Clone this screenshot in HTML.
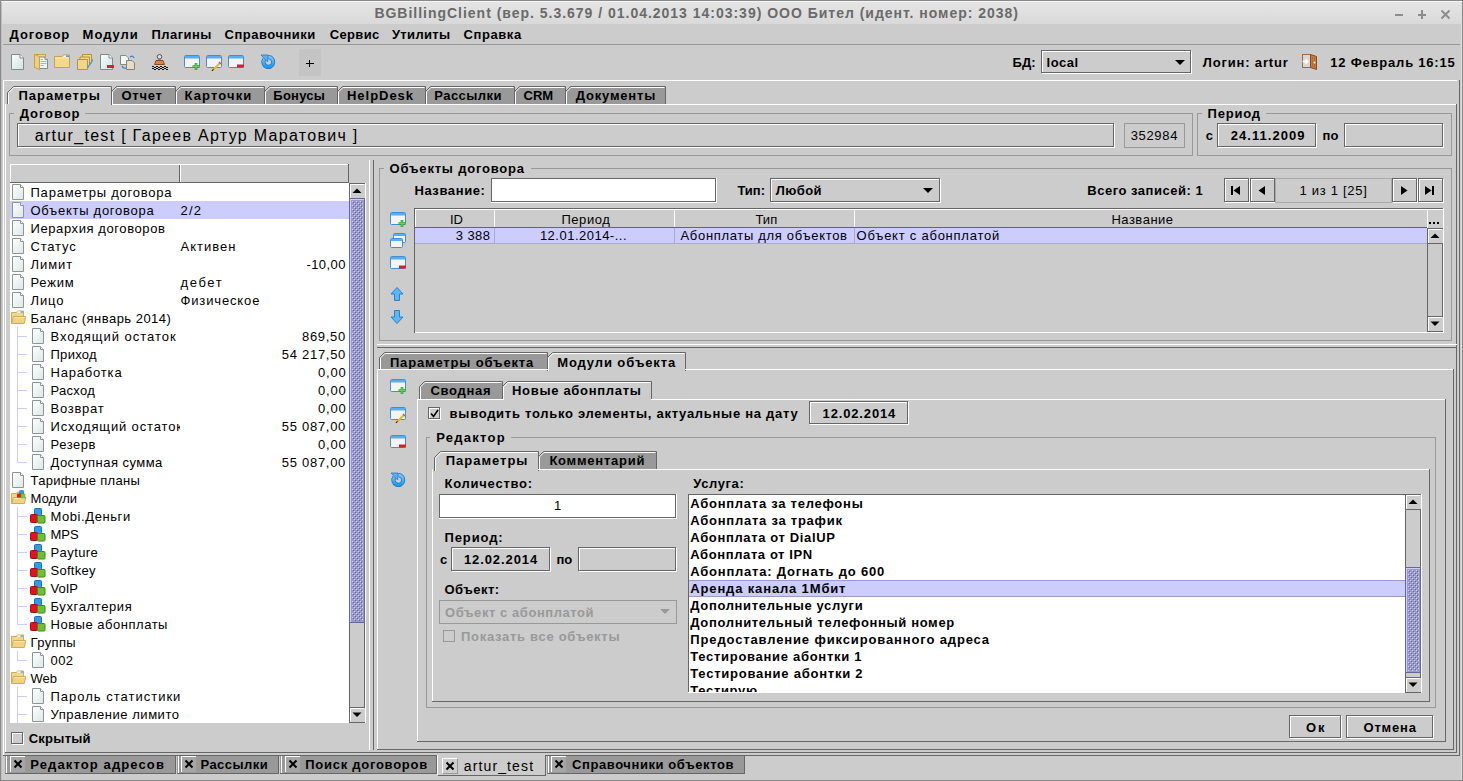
<!DOCTYPE html>
<html><head><meta charset="utf-8"><style>
html,body{margin:0;padding:0;width:1463px;height:781px;overflow:hidden;background:#cccccc}
.a{position:absolute;box-sizing:border-box}
.t{position:absolute;white-space:nowrap;font-family:"Liberation Sans",sans-serif;color:#000}
svg.a{overflow:visible}
</style></head><body>
<div class="a" style="left:0;top:0;width:1463px;height:24px;background:linear-gradient(#e6e6e6,#d9d9d9)"></div>
<div class="a" style="left:0px;top:0px;width:1463px;height:1px;background:#8a8a8a"></div>
<div class="a" style="left:1px;top:1px;width:1461px;height:1px;background:#f4f4f4"></div>
<div class="t" style="left:374.40px;top:4.65px;font-size:14px;line-height:17px;font-weight:bold;letter-spacing:0.983px;color:#6a6a6a;">BGBillingClient (вер. 5.3.679 / 01.04.2013 14:03:39) ООО Бител (идент. номер: 2038)</div>
<div class="a" style="left:1395px;top:14px;width:8px;height:1px;background:#8c8c8c"></div>
<div class="a" style="left:1395px;top:15px;width:8px;height:1px;background:#8c8c8c"></div>
<div class="a" style="left:1418px;top:14px;width:8px;height:1px;background:#8c8c8c"></div>
<div class="a" style="left:1418px;top:15px;width:8px;height:1px;background:#8c8c8c"></div>
<div class="a" style="left:1421px;top:10px;width:2px;height:9px;background:#8c8c8c"></div>
<svg class="a" style="left:1440px;top:9px" width="11" height="11" viewBox="0 0 11 11"><path d="M1.5,1.5 L9.5,9.5 M9.5,1.5 L1.5,9.5" stroke="#8c8c8c" stroke-width="2"/></svg>
<div class="a" style="left:0px;top:0px;width:1px;height:781px;background:#8a8a8a"></div>
<div class="a" style="left:1px;top:2px;width:1px;height:779px;background:#bdbdbd"></div>
<div class="a" style="left:1462px;top:0px;width:1px;height:781px;background:#8a8a8a"></div>
<div class="a" style="left:1461px;top:2px;width:1px;height:779px;background:#dcdcdc"></div>
<div class="a" style="left:3px;top:44px;width:1457px;height:1px;background:#999999"></div>
<div class="t" style="left:9.60px;top:26.50px;font-size:13px;line-height:16px;font-weight:bold;letter-spacing:0.900px;color:#000;">Договор</div>
<div class="t" style="left:82.60px;top:26.50px;font-size:13px;line-height:16px;font-weight:bold;letter-spacing:0.980px;color:#000;">Модули</div>
<div class="t" style="left:151.50px;top:26.50px;font-size:13px;line-height:16px;font-weight:bold;letter-spacing:0.450px;color:#000;">Плагины</div>
<div class="t" style="left:224.60px;top:26.50px;font-size:13px;line-height:16px;font-weight:bold;letter-spacing:0.490px;color:#000;">Справочники</div>
<div class="t" style="left:329.80px;top:26.50px;font-size:13px;line-height:16px;font-weight:bold;letter-spacing:0.320px;color:#000;">Сервис</div>
<div class="t" style="left:391.90px;top:26.50px;font-size:13px;line-height:16px;font-weight:bold;letter-spacing:0.350px;color:#000;">Утилиты</div>
<div class="t" style="left:463.60px;top:26.50px;font-size:13px;line-height:16px;font-weight:bold;letter-spacing:0.567px;color:#000;">Справка</div>
<svg class="a" style="left:11px;top:54px" width="15" height="17" viewBox="0 0 15 17"><defs><linearGradient id="tp" x1="0" y1="0" x2="1" y2="1"><stop offset="0" stop-color="#fbfdfd"/><stop offset="1" stop-color="#d2e2e2"/></linearGradient></defs><path d="M0.5,0.5 H9 L12.5,4 V15.5 H0.5 Z" fill="url(#tp)" stroke="#7d8c8c"/><path d="M9,0.5 V4 H12.5" fill="#fff" stroke="#7d8c8c"/></svg>
<svg class="a" style="left:34px;top:54px" width="16" height="17" viewBox="0 0 16 17"><rect x="0.5" y="0.5" width="11" height="13" fill="#f2d68a" stroke="#c9a050"/><path d="M5.5,3 H11 L13.5,5.5 V14.5 H5.5 Z" fill="#eef6f6" stroke="#7d8c8c"/><path d="M11,3 V5.5 H13.5" fill="#fff" stroke="#7d8c8c"/><path d="M6.5,5.5 H9 M6.5,7.5 H12.5 M6.5,9.5 H12.5 M6.5,11.5 H10" stroke="#aab6b6"/><path d="M0.5,0.5 L5.5,2.5 V15.5 L0.5,13.5 Z" fill="#f0cf7a" stroke="#c9a050"/></svg>
<svg class="a" style="left:54px;top:54px" width="17" height="15" viewBox="0 0 17 15"><path d="M0.5,2.5 H8 L9,1 H15.5 V13.5 H0.5 Z" fill="#f4d98c" stroke="#c9a050"/><path d="M9.5,2.2 H12" stroke="#fff" stroke-width="1.2"/><path d="M12,2.2 H15" stroke="#2aa8f0" stroke-width="1.4"/><path d="M1,4 H15" stroke="#fbeab4"/></svg>
<svg class="a" style="left:77px;top:54px" width="16" height="17" viewBox="0 0 16 17"><path d="M5.5,0.5 H14.5 V9.5 H5.5 Z" fill="#f0d58a" stroke="#b8943a"/><path d="M3,3 H12.5 V12 H3 Z" fill="#f0d58a" stroke="#b8943a"/><path d="M0.5,5.5 H10.5 V15.5 H0.5 Z" fill="#f0d58a" stroke="#b8943a"/><path d="M11,11 V14 M13,8 V11 M15,5 V8" stroke="#3aa0e8" stroke-width="1.5"/></svg>
<svg class="a" style="left:100px;top:54px" width="15" height="17" viewBox="0 0 15 17"><defs><linearGradient id="tp" x1="0" y1="0" x2="1" y2="1"><stop offset="0" stop-color="#fbfdfd"/><stop offset="1" stop-color="#d2e2e2"/></linearGradient></defs><path d="M0.5,0.5 H9 L12.5,4 V15.5 H0.5 Z" fill="url(#tp)" stroke="#7d8c8c"/><path d="M9,0.5 V4 H12.5" fill="#fff" stroke="#7d8c8c"/><rect x="7" y="11" width="7" height="3" fill="#d8202a"/></svg>
<svg class="a" style="left:120px;top:54px" width="17" height="17" viewBox="0 0 17 17"><path d="M0.5,1.5 H6 L8.5,4 V10.5 H0.5 Z" fill="#f2f6f6" stroke="#7d8c8c"/><path d="M6.5,6.5 H12 L14.5,9 V15.5 H6.5 Z" fill="#e8dcc8" stroke="#8c8070"/><path d="M10,3 Q13,1 14,4" fill="none" stroke="#3a78e0" stroke-width="1.2"/><path d="M2,12 Q3,15 6,14" fill="none" stroke="#3a78e0" stroke-width="1.2"/></svg>
<svg class="a" style="left:151px;top:54px" width="18" height="17" viewBox="0 0 18 17"><defs><pattern id="chk" x="1" y="12" width="4" height="2" patternUnits="userSpaceOnUse"><rect x="0" y="0" width="2" height="1" fill="#111"/><rect x="2" y="1" width="2" height="1" fill="#111"/></pattern></defs><circle cx="8.5" cy="2.8" r="2.3" fill="#e0e0e0" stroke="#555"/><rect x="7.5" y="4.5" width="2" height="4" fill="#777"/><path d="M3.5,10.5 L5,6.5 H12 L13.5,10.5 Z" fill="#d8864c" stroke="#8a4a20"/><rect x="1" y="12" width="16" height="4" fill="url(#chk)"/></svg>
<svg class="a" style="left:184px;top:55px" width="17" height="17" viewBox="0 0 17 17"><rect x="0.5" y="0.5" width="15" height="12" rx="1" fill="#f4f4f4" stroke="#3f8fd8"/><rect x="1" y="1" width="14" height="2.5" fill="#5aaef0"/><path d="M12,8 V15 M8.5,11.5 H15.5" stroke="#2aa52a" stroke-width="2.6"/><path d="M12,8.5 V14.5 M9,11.5 H15" stroke="#6fd04f" stroke-width="1.2"/></svg>
<svg class="a" style="left:206px;top:55px" width="17" height="17" viewBox="0 0 17 17"><rect x="0.5" y="0.5" width="15" height="12" rx="1" fill="#f4f4f4" stroke="#3f8fd8"/><rect x="1" y="1" width="14" height="2.5" fill="#5aaef0"/><path d="M7,15 L14,8" stroke="#e8b830" stroke-width="2.2"/><path d="M6,16 L7.5,14" stroke="#333" stroke-width="1.2"/><path d="M13,7 L15,9" stroke="#e05050" stroke-width="1.5"/></svg>
<svg class="a" style="left:228px;top:55px" width="17" height="17" viewBox="0 0 17 17"><rect x="0.5" y="0.5" width="15" height="12" rx="1" fill="#f4f4f4" stroke="#3f8fd8"/><rect x="1" y="1" width="14" height="2.5" fill="#5aaef0"/><rect x="9" y="9.5" width="7" height="3" fill="#d8202a"/></svg>
<svg class="a" style="left:260px;top:54px" width="16" height="16" viewBox="0 0 16 16"><defs><linearGradient id="rg260" x1="0" y1="0" x2="0" y2="1"><stop offset="0" stop-color="#7cc4f4"/><stop offset="1" stop-color="#1a9cf0"/></linearGradient></defs><path d="M8.2,3.1 A4.9,4.9 0 1,1 4.3,5.2" fill="none" stroke="#2272c8" stroke-width="4.2"/><path d="M8.2,3.1 A4.9,4.9 0 1,1 4.3,5.2" fill="none" stroke="url(#rg260)" stroke-width="2.8"/><path d="M1,1 H8 L7.6,8 Z" fill="#5ab0f0" stroke="#2a78d0" stroke-width="0.8"/></svg>
<div class="a" style="left:299px;top:49px;width:22px;height:27px;background:#c4c4c4"></div>
<div class="a" style="left:306px;top:63px;width:8px;height:1px;background:#000"></div>
<div class="a" style="left:309px;top:60px;width:1px;height:7px;background:#000"></div>
<div class="a" style="left:3px;top:80px;width:1454px;height:1px;background:#ffffff"></div>
<div class="t" style="left:1012.60px;top:54.50px;font-size:13px;line-height:16px;font-weight:bold;letter-spacing:0.000px;color:#000;">БД:</div>
<div class="a" style="left:1042px;top:51px;width:150px;height:23px;border:1px solid #fff"></div>
<div class="a" style="left:1041px;top:50px;width:150px;height:23px;border:1px solid #666"></div>
<div class="t" style="left:1046.50px;top:54.50px;font-size:13px;line-height:16px;font-weight:bold;letter-spacing:0.525px;color:#000;">local</div>
<svg class="a" style="left:1175px;top:60px" width="11" height="6" viewBox="0 0 11 6"><path d="M0,0 H10 L5,5 Z" fill="#000"/></svg>
<div class="t" style="left:1202.70px;top:54.50px;font-size:13px;line-height:16px;font-weight:bold;letter-spacing:0.845px;color:#000;">Логин: artur</div>
<svg class="a" style="left:1302px;top:54px" width="16" height="17" viewBox="0 0 16 17"><rect x="0.5" y="0.5" width="8" height="13" fill="#d8d8d8" stroke="#a8643a"/><path d="M0.5,7.5 H5.5" stroke="#fff" stroke-width="1.6"/><path d="M3.5,5.3 L5.8,7.5 L3.5,9.7" fill="none" stroke="#fff" stroke-width="1.4"/><path d="M8.5,0.5 L14.5,2.5 V15.5 L8.5,13.5 Z" fill="#c87a40" stroke="#8a4a20"/><path d="M10.5,3 V13 M12.5,3.5 V13.5" stroke="#a85e2c" stroke-width="0.6"/><circle cx="12.5" cy="8.5" r="0.9" fill="#fff"/></svg>
<div class="t" style="left:1330.30px;top:54.50px;font-size:13px;line-height:16px;font-weight:bold;letter-spacing:0.780px;color:#000;">12 Февраль 16:15</div>
<div class="a" style="left:3px;top:80px;width:1px;height:676px;background:#fff"></div>
<div class="a" style="left:3px;top:755px;width:1457px;height:1px;background:#666"></div>
<div class="a" style="left:1459px;top:80px;width:1px;height:676px;background:#666"></div>
<div class="a" style="left:5px;top:104px;width:1452px;height:1px;background:#fff"></div>
<div class="a" style="left:5px;top:104px;width:1px;height:649px;background:#fff"></div>
<div class="a" style="left:5px;top:752px;width:1452px;height:1px;background:#666"></div>
<div class="a" style="left:1456px;top:104px;width:1px;height:649px;background:#666"></div>
<svg class="a" style="left:111px;top:86px" width="65" height="18" viewBox="0 0 65 18"><polygon points="0.5,18 0.5,5.5 5.5,0.5 64.5,0.5 64.5,18" fill="#999999"/><polyline points="0.5,18 0.5,5.5 5.5,0.5 64.5,0.5 64.5,18" fill="none" stroke="#666" stroke-width="1"/><polyline points="1.5,18 1.5,5.9 5.9,1.5 63.5,1.5" fill="none" stroke="#fff" stroke-width="1"/></svg>
<div class="t" style="left:121.50px;top:87.50px;font-size:13px;line-height:16px;font-weight:bold;letter-spacing:0.750px;color:#000;">Отчет</div>
<svg class="a" style="left:175px;top:86px" width="90" height="18" viewBox="0 0 90 18"><polygon points="0.5,18 0.5,5.5 5.5,0.5 89.5,0.5 89.5,18" fill="#999999"/><polyline points="0.5,18 0.5,5.5 5.5,0.5 89.5,0.5 89.5,18" fill="none" stroke="#666" stroke-width="1"/><polyline points="1.5,18 1.5,5.9 5.9,1.5 88.5,1.5" fill="none" stroke="#fff" stroke-width="1"/></svg>
<div class="t" style="left:184.50px;top:87.50px;font-size:13px;line-height:16px;font-weight:bold;letter-spacing:1.114px;color:#000;">Карточки</div>
<svg class="a" style="left:264px;top:86px" width="74" height="18" viewBox="0 0 74 18"><polygon points="0.5,18 0.5,5.5 5.5,0.5 73.5,0.5 73.5,18" fill="#999999"/><polyline points="0.5,18 0.5,5.5 5.5,0.5 73.5,0.5 73.5,18" fill="none" stroke="#666" stroke-width="1"/><polyline points="1.5,18 1.5,5.9 5.9,1.5 72.5,1.5" fill="none" stroke="#fff" stroke-width="1"/></svg>
<div class="t" style="left:273.30px;top:87.50px;font-size:13px;line-height:16px;font-weight:bold;letter-spacing:0.240px;color:#000;">Бонусы</div>
<svg class="a" style="left:337px;top:86px" width="89" height="18" viewBox="0 0 89 18"><polygon points="0.5,18 0.5,5.5 5.5,0.5 88.5,0.5 88.5,18" fill="#999999"/><polyline points="0.5,18 0.5,5.5 5.5,0.5 88.5,0.5 88.5,18" fill="none" stroke="#666" stroke-width="1"/><polyline points="1.5,18 1.5,5.9 5.9,1.5 87.5,1.5" fill="none" stroke="#fff" stroke-width="1"/></svg>
<div class="t" style="left:347.00px;top:87.50px;font-size:13px;line-height:16px;font-weight:bold;letter-spacing:0.971px;color:#000;">HelpDesk</div>
<svg class="a" style="left:425px;top:86px" width="90" height="18" viewBox="0 0 90 18"><polygon points="0.5,18 0.5,5.5 5.5,0.5 89.5,0.5 89.5,18" fill="#999999"/><polyline points="0.5,18 0.5,5.5 5.5,0.5 89.5,0.5 89.5,18" fill="none" stroke="#666" stroke-width="1"/><polyline points="1.5,18 1.5,5.9 5.9,1.5 88.5,1.5" fill="none" stroke="#fff" stroke-width="1"/></svg>
<div class="t" style="left:434.30px;top:87.50px;font-size:13px;line-height:16px;font-weight:bold;letter-spacing:0.443px;color:#000;">Рассылки</div>
<svg class="a" style="left:514px;top:86px" width="52" height="18" viewBox="0 0 52 18"><polygon points="0.5,18 0.5,5.5 5.5,0.5 51.5,0.5 51.5,18" fill="#999999"/><polyline points="0.5,18 0.5,5.5 5.5,0.5 51.5,0.5 51.5,18" fill="none" stroke="#666" stroke-width="1"/><polyline points="1.5,18 1.5,5.9 5.9,1.5 50.5,1.5" fill="none" stroke="#fff" stroke-width="1"/></svg>
<div class="t" style="left:523.50px;top:87.50px;font-size:13px;line-height:16px;font-weight:bold;letter-spacing:0.000px;color:#000;">CRM</div>
<svg class="a" style="left:565px;top:86px" width="101" height="18" viewBox="0 0 101 18"><polygon points="0.5,18 0.5,5.5 5.5,0.5 100.5,0.5 100.5,18" fill="#999999"/><polyline points="0.5,18 0.5,5.5 5.5,0.5 100.5,0.5 100.5,18" fill="none" stroke="#666" stroke-width="1"/><polyline points="1.5,18 1.5,5.9 5.9,1.5 99.5,1.5" fill="none" stroke="#fff" stroke-width="1"/></svg>
<div class="t" style="left:575.80px;top:87.50px;font-size:13px;line-height:16px;font-weight:bold;letter-spacing:0.800px;color:#000;">Документы</div>
<svg class="a" style="left:7px;top:86px" width="105" height="19" viewBox="0 0 105 19"><polygon points="0.5,19 0.5,6.5 6.5,0.5 104.5,0.5 104.5,19" fill="#cccccc"/><polyline points="0.5,19 0.5,6.5 6.5,0.5 104.5,0.5 104.5,19" fill="none" stroke="#666" stroke-width="1"/><polyline points="1.5,19 1.5,6.9 6.9,1.5 103.5,1.5" fill="none" stroke="#fff" stroke-width="1"/></svg>
<div class="a" style="left:6px;top:104px;width:105px;height:1px;background:#ccc"></div>
<div class="t" style="left:18.60px;top:87.50px;font-size:13px;line-height:16px;font-weight:bold;letter-spacing:0.925px;color:#000;">Параметры</div>
<div class="a" style="left:9px;top:113px;width:1184px;height:43px;border:1px solid #999"></div>
<div class="a" style="left:13.7px;top:112px;width:71.6px;height:3px;background:#ccc"></div>
<div class="t" style="left:19.70px;top:105.90px;font-size:13px;line-height:16px;font-weight:bold;letter-spacing:0.933px;color:#000;">Договор</div>
<div class="a" style="left:18px;top:124px;width:1097px;height:24px;border:1px solid #fff"></div>
<div class="a" style="left:17px;top:123px;width:1097px;height:24px;border:1px solid #666"></div>
<div class="t" style="left:34.80px;top:125.96px;font-size:16px;line-height:19px;font-weight:normal;letter-spacing:1.300px;color:#000;">artur_test [ Гареев Артур Маратович ]</div>
<div class="a" style="left:1124px;top:123px;width:61px;height:25px;border:1px solid #999"></div>
<div class="t" style="left:1130.70px;top:127.50px;font-size:13px;line-height:16px;font-weight:normal;letter-spacing:0.660px;color:#000;">352984</div>
<div class="a" style="left:1197px;top:113px;width:255px;height:43px;border:1px solid #999"></div>
<div class="a" style="left:1201.6px;top:112px;width:64.90000000000009px;height:3px;background:#ccc"></div>
<div class="t" style="left:1207.60px;top:105.90px;font-size:13px;line-height:16px;font-weight:bold;letter-spacing:0.780px;color:#000;">Период</div>
<div class="t" style="left:1205.80px;top:127.50px;font-size:13px;line-height:16px;font-weight:bold;letter-spacing:0.000px;color:#000;">с</div>
<div class="a" style="left:1218px;top:124px;width:99px;height:24px;border:1px solid #fff"></div>
<div class="a" style="left:1217px;top:123px;width:99px;height:24px;border:1px solid #666"></div>
<div class="t" style="left:1230.80px;top:127.50px;font-size:13px;line-height:16px;font-weight:bold;letter-spacing:1.044px;color:#000;">24.11.2009</div>
<div class="t" style="left:1322.60px;top:127.50px;font-size:13px;line-height:16px;font-weight:bold;letter-spacing:0.000px;color:#000;">по</div>
<div class="a" style="left:1345px;top:124px;width:99px;height:24px;border:1px solid #fff"></div>
<div class="a" style="left:1344px;top:123px;width:99px;height:24px;border:1px solid #666"></div>
<div class="a" style="left:10px;top:164px;width:339px;height:19px;background:#cccccc"></div>
<div class="a" style="left:10px;top:164px;width:339px;height:1px;background:#fff"></div>
<div class="a" style="left:10px;top:182px;width:339px;height:1px;background:#666"></div>
<div class="a" style="left:10px;top:164px;width:1px;height:18px;background:#fff"></div>
<div class="a" style="left:179px;top:165px;width:1px;height:17px;background:#666"></div>
<div class="a" style="left:180px;top:165px;width:1px;height:17px;background:#fff"></div>
<div class="a" style="left:348px;top:164px;width:1px;height:19px;background:#666"></div>
<div class="a" style="left:10px;top:183px;width:339px;height:540px;background:#fff"></div>
<div class="a" style="left:10px;top:201px;width:339px;height:18px;background:#ccccff"></div>
<div class="a" style="left:17px;top:327px;width:1px;height:136px;background:#ccccff"></div>
<div class="a" style="left:17px;top:336px;width:10px;height:1px;background:#ccccff"></div>
<div class="a" style="left:17px;top:354px;width:10px;height:1px;background:#ccccff"></div>
<div class="a" style="left:17px;top:372px;width:10px;height:1px;background:#ccccff"></div>
<div class="a" style="left:17px;top:390px;width:10px;height:1px;background:#ccccff"></div>
<div class="a" style="left:17px;top:408px;width:10px;height:1px;background:#ccccff"></div>
<div class="a" style="left:17px;top:426px;width:10px;height:1px;background:#ccccff"></div>
<div class="a" style="left:17px;top:444px;width:10px;height:1px;background:#ccccff"></div>
<div class="a" style="left:17px;top:462px;width:10px;height:1px;background:#ccccff"></div>
<div class="a" style="left:17px;top:507px;width:1px;height:118px;background:#ccccff"></div>
<div class="a" style="left:17px;top:516px;width:10px;height:1px;background:#ccccff"></div>
<div class="a" style="left:17px;top:534px;width:10px;height:1px;background:#ccccff"></div>
<div class="a" style="left:17px;top:552px;width:10px;height:1px;background:#ccccff"></div>
<div class="a" style="left:17px;top:570px;width:10px;height:1px;background:#ccccff"></div>
<div class="a" style="left:17px;top:588px;width:10px;height:1px;background:#ccccff"></div>
<div class="a" style="left:17px;top:606px;width:10px;height:1px;background:#ccccff"></div>
<div class="a" style="left:17px;top:624px;width:10px;height:1px;background:#ccccff"></div>
<div class="a" style="left:17px;top:651px;width:1px;height:10px;background:#ccccff"></div>
<div class="a" style="left:17px;top:660px;width:10px;height:1px;background:#ccccff"></div>
<div class="a" style="left:17px;top:687px;width:1px;height:37px;background:#ccccff"></div>
<div class="a" style="left:17px;top:696px;width:10px;height:1px;background:#ccccff"></div>
<div class="a" style="left:17px;top:714px;width:10px;height:1px;background:#ccccff"></div>
<svg class="a" style="left:12px;top:184px" width="13" height="17" viewBox="0 0 13 17"><defs><linearGradient id="pg" x1="0" y1="0" x2="1" y2="1"><stop offset="0" stop-color="#ffffff"/><stop offset="1" stop-color="#dde6e6"/></linearGradient></defs><path d="M0.5,0.5 H8.5 L11.5,3.5 V15.5 H0.5 Z" fill="url(#pg)" stroke="#8c9696"/><path d="M8.5,0.5 V3.5 H11.5" fill="#fff" stroke="#8c9696"/></svg>
<div class="t" style="left:30.50px;top:184.50px;font-size:13px;line-height:16px;font-weight:normal;letter-spacing:0.776px;color:#000;">Параметры договора</div>
<svg class="a" style="left:12px;top:202px" width="13" height="17" viewBox="0 0 13 17"><defs><linearGradient id="pg" x1="0" y1="0" x2="1" y2="1"><stop offset="0" stop-color="#ffffff"/><stop offset="1" stop-color="#dde6e6"/></linearGradient></defs><path d="M0.5,0.5 H8.5 L11.5,3.5 V15.5 H0.5 Z" fill="url(#pg)" stroke="#8c9696"/><path d="M8.5,0.5 V3.5 H11.5" fill="#fff" stroke="#8c9696"/></svg>
<div class="t" style="left:30.50px;top:202.50px;font-size:13px;line-height:16px;font-weight:normal;letter-spacing:0.733px;color:#000;">Объекты договора</div>
<div class="t" style="left:180.50px;top:202.50px;font-size:13px;line-height:16px;font-weight:normal;letter-spacing:1.150px;color:#000;">2/2</div>
<svg class="a" style="left:12px;top:220px" width="13" height="17" viewBox="0 0 13 17"><defs><linearGradient id="pg" x1="0" y1="0" x2="1" y2="1"><stop offset="0" stop-color="#ffffff"/><stop offset="1" stop-color="#dde6e6"/></linearGradient></defs><path d="M0.5,0.5 H8.5 L11.5,3.5 V15.5 H0.5 Z" fill="url(#pg)" stroke="#8c9696"/><path d="M8.5,0.5 V3.5 H11.5" fill="#fff" stroke="#8c9696"/></svg>
<div class="t" style="left:30.50px;top:220.50px;font-size:13px;line-height:16px;font-weight:normal;letter-spacing:0.588px;color:#000;">Иерархия договоров</div>
<svg class="a" style="left:12px;top:238px" width="13" height="17" viewBox="0 0 13 17"><defs><linearGradient id="pg" x1="0" y1="0" x2="1" y2="1"><stop offset="0" stop-color="#ffffff"/><stop offset="1" stop-color="#dde6e6"/></linearGradient></defs><path d="M0.5,0.5 H8.5 L11.5,3.5 V15.5 H0.5 Z" fill="url(#pg)" stroke="#8c9696"/><path d="M8.5,0.5 V3.5 H11.5" fill="#fff" stroke="#8c9696"/></svg>
<div class="t" style="left:30.50px;top:238.50px;font-size:13px;line-height:16px;font-weight:normal;letter-spacing:0.820px;color:#000;">Статус</div>
<div class="t" style="left:180.50px;top:238.50px;font-size:13px;line-height:16px;font-weight:normal;letter-spacing:1.017px;color:#000;">Активен</div>
<svg class="a" style="left:12px;top:256px" width="13" height="17" viewBox="0 0 13 17"><defs><linearGradient id="pg" x1="0" y1="0" x2="1" y2="1"><stop offset="0" stop-color="#ffffff"/><stop offset="1" stop-color="#dde6e6"/></linearGradient></defs><path d="M0.5,0.5 H8.5 L11.5,3.5 V15.5 H0.5 Z" fill="url(#pg)" stroke="#8c9696"/><path d="M8.5,0.5 V3.5 H11.5" fill="#fff" stroke="#8c9696"/></svg>
<div class="t" style="left:30.50px;top:256.50px;font-size:13px;line-height:16px;font-weight:normal;letter-spacing:0.925px;color:#000;">Лимит</div>
<div class="t" style="left:306.50px;top:256.50px;font-size:13px;line-height:16px;font-weight:normal;letter-spacing:0.400px;color:#000;">-10,00</div>
<svg class="a" style="left:12px;top:274px" width="13" height="17" viewBox="0 0 13 17"><defs><linearGradient id="pg" x1="0" y1="0" x2="1" y2="1"><stop offset="0" stop-color="#ffffff"/><stop offset="1" stop-color="#dde6e6"/></linearGradient></defs><path d="M0.5,0.5 H8.5 L11.5,3.5 V15.5 H0.5 Z" fill="url(#pg)" stroke="#8c9696"/><path d="M8.5,0.5 V3.5 H11.5" fill="#fff" stroke="#8c9696"/></svg>
<div class="t" style="left:30.50px;top:274.50px;font-size:13px;line-height:16px;font-weight:normal;letter-spacing:0.750px;color:#000;">Режим</div>
<div class="t" style="left:180.50px;top:274.50px;font-size:13px;line-height:16px;font-weight:normal;letter-spacing:1.625px;color:#000;">дебет</div>
<svg class="a" style="left:12px;top:292px" width="13" height="17" viewBox="0 0 13 17"><defs><linearGradient id="pg" x1="0" y1="0" x2="1" y2="1"><stop offset="0" stop-color="#ffffff"/><stop offset="1" stop-color="#dde6e6"/></linearGradient></defs><path d="M0.5,0.5 H8.5 L11.5,3.5 V15.5 H0.5 Z" fill="url(#pg)" stroke="#8c9696"/><path d="M8.5,0.5 V3.5 H11.5" fill="#fff" stroke="#8c9696"/></svg>
<div class="t" style="left:30.50px;top:292.50px;font-size:13px;line-height:16px;font-weight:normal;letter-spacing:0.867px;color:#000;">Лицо</div>
<div class="t" style="left:180.50px;top:292.50px;font-size:13px;line-height:16px;font-weight:normal;letter-spacing:0.856px;color:#000;">Физическое</div>
<svg class="a" style="left:11px;top:310px" width="16" height="15" viewBox="0 0 16 15"><path d="M0.5,2.5 H5.5 L6.5,1 H12.5 V13.5 H0.5 Z" fill="#f4d888" stroke="#d2aa58"/><path d="M6.5,2 H12" stroke="#fff" stroke-width="1.2"/><path d="M9.5,2 H12" stroke="#3aa8f0" stroke-width="1.4"/><path d="M0.8,13.5 L2.3,6.5 H14.8 L13.3,13.5 Z" fill="#f2d384" stroke="#d2aa58"/><path d="M2.8,7.5 H13.8" stroke="#fbeab0"/></svg>
<div class="t" style="left:30.50px;top:310.50px;font-size:13px;line-height:16px;font-weight:normal;letter-spacing:0.479px;color:#000;">Баланс (январь 2014)</div>
<svg class="a" style="left:32px;top:328px" width="13" height="17" viewBox="0 0 13 17"><defs><linearGradient id="pg" x1="0" y1="0" x2="1" y2="1"><stop offset="0" stop-color="#ffffff"/><stop offset="1" stop-color="#dde6e6"/></linearGradient></defs><path d="M0.5,0.5 H8.5 L11.5,3.5 V15.5 H0.5 Z" fill="url(#pg)" stroke="#8c9696"/><path d="M8.5,0.5 V3.5 H11.5" fill="#fff" stroke="#8c9696"/></svg>
<div class="t" style="left:50.50px;top:328.50px;font-size:13px;line-height:16px;font-weight:normal;letter-spacing:0.973px;color:#000;">Входящий остаток</div>
<div class="t" style="left:302.00px;top:328.50px;font-size:13px;line-height:16px;font-weight:normal;letter-spacing:0.700px;color:#000;">869,50</div>
<svg class="a" style="left:32px;top:346px" width="13" height="17" viewBox="0 0 13 17"><defs><linearGradient id="pg" x1="0" y1="0" x2="1" y2="1"><stop offset="0" stop-color="#ffffff"/><stop offset="1" stop-color="#dde6e6"/></linearGradient></defs><path d="M0.5,0.5 H8.5 L11.5,3.5 V15.5 H0.5 Z" fill="url(#pg)" stroke="#8c9696"/><path d="M8.5,0.5 V3.5 H11.5" fill="#fff" stroke="#8c9696"/></svg>
<div class="t" style="left:50.50px;top:346.50px;font-size:13px;line-height:16px;font-weight:normal;letter-spacing:0.280px;color:#000;">Приход</div>
<div class="t" style="left:281.80px;top:346.50px;font-size:13px;line-height:16px;font-weight:normal;letter-spacing:0.712px;color:#000;">54 217,50</div>
<svg class="a" style="left:32px;top:364px" width="13" height="17" viewBox="0 0 13 17"><defs><linearGradient id="pg" x1="0" y1="0" x2="1" y2="1"><stop offset="0" stop-color="#ffffff"/><stop offset="1" stop-color="#dde6e6"/></linearGradient></defs><path d="M0.5,0.5 H8.5 L11.5,3.5 V15.5 H0.5 Z" fill="url(#pg)" stroke="#8c9696"/><path d="M8.5,0.5 V3.5 H11.5" fill="#fff" stroke="#8c9696"/></svg>
<div class="t" style="left:50.50px;top:364.50px;font-size:13px;line-height:16px;font-weight:normal;letter-spacing:0.812px;color:#000;">Наработка</div>
<div class="t" style="left:318.00px;top:364.50px;font-size:13px;line-height:16px;font-weight:normal;letter-spacing:0.833px;color:#000;">0,00</div>
<svg class="a" style="left:32px;top:382px" width="13" height="17" viewBox="0 0 13 17"><defs><linearGradient id="pg" x1="0" y1="0" x2="1" y2="1"><stop offset="0" stop-color="#ffffff"/><stop offset="1" stop-color="#dde6e6"/></linearGradient></defs><path d="M0.5,0.5 H8.5 L11.5,3.5 V15.5 H0.5 Z" fill="url(#pg)" stroke="#8c9696"/><path d="M8.5,0.5 V3.5 H11.5" fill="#fff" stroke="#8c9696"/></svg>
<div class="t" style="left:50.50px;top:382.50px;font-size:13px;line-height:16px;font-weight:normal;letter-spacing:0.300px;color:#000;">Расход</div>
<div class="t" style="left:318.00px;top:382.50px;font-size:13px;line-height:16px;font-weight:normal;letter-spacing:0.833px;color:#000;">0,00</div>
<svg class="a" style="left:32px;top:400px" width="13" height="17" viewBox="0 0 13 17"><defs><linearGradient id="pg" x1="0" y1="0" x2="1" y2="1"><stop offset="0" stop-color="#ffffff"/><stop offset="1" stop-color="#dde6e6"/></linearGradient></defs><path d="M0.5,0.5 H8.5 L11.5,3.5 V15.5 H0.5 Z" fill="url(#pg)" stroke="#8c9696"/><path d="M8.5,0.5 V3.5 H11.5" fill="#fff" stroke="#8c9696"/></svg>
<div class="t" style="left:50.50px;top:400.50px;font-size:13px;line-height:16px;font-weight:normal;letter-spacing:0.750px;color:#000;">Возврат</div>
<div class="t" style="left:318.00px;top:400.50px;font-size:13px;line-height:16px;font-weight:normal;letter-spacing:0.833px;color:#000;">0,00</div>
<svg class="a" style="left:32px;top:418px" width="13" height="17" viewBox="0 0 13 17"><defs><linearGradient id="pg" x1="0" y1="0" x2="1" y2="1"><stop offset="0" stop-color="#ffffff"/><stop offset="1" stop-color="#dde6e6"/></linearGradient></defs><path d="M0.5,0.5 H8.5 L11.5,3.5 V15.5 H0.5 Z" fill="url(#pg)" stroke="#8c9696"/><path d="M8.5,0.5 V3.5 H11.5" fill="#fff" stroke="#8c9696"/></svg>
<div class="a" style="left:0;top:0;width:180px;height:781px;overflow:hidden">
<div class="t" style="left:50.50px;top:418.50px;font-size:13px;line-height:16px;font-weight:normal;letter-spacing:0.850px;color:#000;">Исходящий остаток</div>
</div>
<div class="t" style="left:281.80px;top:418.50px;font-size:13px;line-height:16px;font-weight:normal;letter-spacing:0.712px;color:#000;">55 087,00</div>
<svg class="a" style="left:32px;top:436px" width="13" height="17" viewBox="0 0 13 17"><defs><linearGradient id="pg" x1="0" y1="0" x2="1" y2="1"><stop offset="0" stop-color="#ffffff"/><stop offset="1" stop-color="#dde6e6"/></linearGradient></defs><path d="M0.5,0.5 H8.5 L11.5,3.5 V15.5 H0.5 Z" fill="url(#pg)" stroke="#8c9696"/><path d="M8.5,0.5 V3.5 H11.5" fill="#fff" stroke="#8c9696"/></svg>
<div class="t" style="left:50.50px;top:436.50px;font-size:13px;line-height:16px;font-weight:normal;letter-spacing:0.560px;color:#000;">Резерв</div>
<div class="t" style="left:318.00px;top:436.50px;font-size:13px;line-height:16px;font-weight:normal;letter-spacing:0.833px;color:#000;">0,00</div>
<svg class="a" style="left:32px;top:454px" width="13" height="17" viewBox="0 0 13 17"><defs><linearGradient id="pg" x1="0" y1="0" x2="1" y2="1"><stop offset="0" stop-color="#ffffff"/><stop offset="1" stop-color="#dde6e6"/></linearGradient></defs><path d="M0.5,0.5 H8.5 L11.5,3.5 V15.5 H0.5 Z" fill="url(#pg)" stroke="#8c9696"/><path d="M8.5,0.5 V3.5 H11.5" fill="#fff" stroke="#8c9696"/></svg>
<div class="t" style="left:50.50px;top:454.50px;font-size:13px;line-height:16px;font-weight:normal;letter-spacing:0.464px;color:#000;">Доступная сумма</div>
<div class="t" style="left:281.80px;top:454.50px;font-size:13px;line-height:16px;font-weight:normal;letter-spacing:0.712px;color:#000;">55 087,00</div>
<svg class="a" style="left:12px;top:472px" width="13" height="17" viewBox="0 0 13 17"><defs><linearGradient id="pg" x1="0" y1="0" x2="1" y2="1"><stop offset="0" stop-color="#ffffff"/><stop offset="1" stop-color="#dde6e6"/></linearGradient></defs><path d="M0.5,0.5 H8.5 L11.5,3.5 V15.5 H0.5 Z" fill="url(#pg)" stroke="#8c9696"/><path d="M8.5,0.5 V3.5 H11.5" fill="#fff" stroke="#8c9696"/></svg>
<div class="t" style="left:30.50px;top:472.50px;font-size:13px;line-height:16px;font-weight:normal;letter-spacing:0.292px;color:#000;">Тарифные планы</div>
<svg class="a" style="left:11px;top:490px" width="16" height="15" viewBox="0 0 16 15"><path d="M0.5,3.5 H5.5 L6.5,2 H12.5 V13.5 H0.5 Z" fill="#f4d888" stroke="#d2aa58"/><path d="M0.8,13.5 L2.3,7.5 H14.8 L13.3,13.5 Z" fill="#f2d384" stroke="#d2aa58"/><path d="M2.8,8.5 H13.8" stroke="#fbeab0"/><rect x="8.5" y="0.5" width="4" height="4" rx="0.6" fill="#2c9ae0" stroke="#1e78c0" stroke-width="0.6"/><rect x="6" y="3.5" width="4" height="4" fill="#e81818"/><rect x="10" y="4" width="4" height="4" fill="#72d040" stroke="#4a9a28" stroke-width="0.5"/></svg>
<div class="t" style="left:30.50px;top:490.50px;font-size:13px;line-height:16px;font-weight:normal;letter-spacing:0.000px;color:#000;">Модули</div>
<svg class="a" style="left:30px;top:508px" width="16" height="16" viewBox="0 0 16 16"><rect x="4.5" y="0.5" width="7" height="7" rx="1" fill="#27a0e8" stroke="#1c6fb0"/><rect x="0.5" y="6.5" width="7" height="8" rx="1" fill="#e8101c" stroke="#a80c14"/><rect x="7.5" y="7.5" width="7.5" height="7.5" rx="1" fill="#6cc038" stroke="#3f8a1f"/></svg>
<div class="t" style="left:50.50px;top:508.50px;font-size:13px;line-height:16px;font-weight:normal;letter-spacing:0.590px;color:#000;">Mobi.Деньги</div>
<svg class="a" style="left:30px;top:526px" width="16" height="16" viewBox="0 0 16 16"><rect x="4.5" y="0.5" width="7" height="7" rx="1" fill="#27a0e8" stroke="#1c6fb0"/><rect x="0.5" y="6.5" width="7" height="8" rx="1" fill="#e8101c" stroke="#a80c14"/><rect x="7.5" y="7.5" width="7.5" height="7.5" rx="1" fill="#6cc038" stroke="#3f8a1f"/></svg>
<div class="t" style="left:50.50px;top:526.50px;font-size:13px;line-height:16px;font-weight:normal;letter-spacing:0.000px;color:#000;">MPS</div>
<svg class="a" style="left:30px;top:544px" width="16" height="16" viewBox="0 0 16 16"><rect x="4.5" y="0.5" width="7" height="7" rx="1" fill="#27a0e8" stroke="#1c6fb0"/><rect x="0.5" y="6.5" width="7" height="8" rx="1" fill="#e8101c" stroke="#a80c14"/><rect x="7.5" y="7.5" width="7.5" height="7.5" rx="1" fill="#6cc038" stroke="#3f8a1f"/></svg>
<div class="t" style="left:50.50px;top:544.50px;font-size:13px;line-height:16px;font-weight:normal;letter-spacing:0.417px;color:#000;">Payture</div>
<svg class="a" style="left:30px;top:562px" width="16" height="16" viewBox="0 0 16 16"><rect x="4.5" y="0.5" width="7" height="7" rx="1" fill="#27a0e8" stroke="#1c6fb0"/><rect x="0.5" y="6.5" width="7" height="8" rx="1" fill="#e8101c" stroke="#a80c14"/><rect x="7.5" y="7.5" width="7.5" height="7.5" rx="1" fill="#6cc038" stroke="#3f8a1f"/></svg>
<div class="t" style="left:50.50px;top:562.50px;font-size:13px;line-height:16px;font-weight:normal;letter-spacing:0.283px;color:#000;">Softkey</div>
<svg class="a" style="left:30px;top:580px" width="16" height="16" viewBox="0 0 16 16"><rect x="4.5" y="0.5" width="7" height="7" rx="1" fill="#27a0e8" stroke="#1c6fb0"/><rect x="0.5" y="6.5" width="7" height="8" rx="1" fill="#e8101c" stroke="#a80c14"/><rect x="7.5" y="7.5" width="7.5" height="7.5" rx="1" fill="#6cc038" stroke="#3f8a1f"/></svg>
<div class="t" style="left:50.50px;top:580.50px;font-size:13px;line-height:16px;font-weight:normal;letter-spacing:0.000px;color:#000;">VoIP</div>
<svg class="a" style="left:30px;top:598px" width="16" height="16" viewBox="0 0 16 16"><rect x="4.5" y="0.5" width="7" height="7" rx="1" fill="#27a0e8" stroke="#1c6fb0"/><rect x="0.5" y="6.5" width="7" height="8" rx="1" fill="#e8101c" stroke="#a80c14"/><rect x="7.5" y="7.5" width="7.5" height="7.5" rx="1" fill="#6cc038" stroke="#3f8a1f"/></svg>
<div class="t" style="left:50.50px;top:598.50px;font-size:13px;line-height:16px;font-weight:normal;letter-spacing:0.620px;color:#000;">Бухгалтерия</div>
<svg class="a" style="left:30px;top:616px" width="16" height="16" viewBox="0 0 16 16"><rect x="4.5" y="0.5" width="7" height="7" rx="1" fill="#27a0e8" stroke="#1c6fb0"/><rect x="0.5" y="6.5" width="7" height="8" rx="1" fill="#e8101c" stroke="#a80c14"/><rect x="7.5" y="7.5" width="7.5" height="7.5" rx="1" fill="#6cc038" stroke="#3f8a1f"/></svg>
<div class="t" style="left:50.50px;top:616.50px;font-size:13px;line-height:16px;font-weight:normal;letter-spacing:0.521px;color:#000;">Новые абонплаты</div>
<svg class="a" style="left:11px;top:634px" width="16" height="15" viewBox="0 0 16 15"><path d="M0.5,2.5 H5.5 L6.5,1 H12.5 V13.5 H0.5 Z" fill="#f4d888" stroke="#d2aa58"/><path d="M6.5,2 H12" stroke="#fff" stroke-width="1.2"/><path d="M9.5,2 H12" stroke="#3aa8f0" stroke-width="1.4"/><path d="M0.8,13.5 L2.3,6.5 H14.8 L13.3,13.5 Z" fill="#f2d384" stroke="#d2aa58"/><path d="M2.8,7.5 H13.8" stroke="#fbeab0"/></svg>
<div class="t" style="left:30.50px;top:634.50px;font-size:13px;line-height:16px;font-weight:normal;letter-spacing:0.380px;color:#000;">Группы</div>
<svg class="a" style="left:32px;top:652px" width="13" height="17" viewBox="0 0 13 17"><defs><linearGradient id="pg" x1="0" y1="0" x2="1" y2="1"><stop offset="0" stop-color="#ffffff"/><stop offset="1" stop-color="#dde6e6"/></linearGradient></defs><path d="M0.5,0.5 H8.5 L11.5,3.5 V15.5 H0.5 Z" fill="url(#pg)" stroke="#8c9696"/><path d="M8.5,0.5 V3.5 H11.5" fill="#fff" stroke="#8c9696"/></svg>
<div class="t" style="left:50.50px;top:652.50px;font-size:13px;line-height:16px;font-weight:normal;letter-spacing:0.450px;color:#000;">002</div>
<svg class="a" style="left:11px;top:670px" width="16" height="15" viewBox="0 0 16 15"><path d="M0.5,2.5 H5.5 L6.5,1 H12.5 V13.5 H0.5 Z" fill="#f4d888" stroke="#d2aa58"/><path d="M6.5,2 H12" stroke="#fff" stroke-width="1.2"/><path d="M9.5,2 H12" stroke="#3aa8f0" stroke-width="1.4"/><path d="M0.8,13.5 L2.3,6.5 H14.8 L13.3,13.5 Z" fill="#f2d384" stroke="#d2aa58"/><path d="M2.8,7.5 H13.8" stroke="#fbeab0"/></svg>
<div class="t" style="left:30.50px;top:670.50px;font-size:13px;line-height:16px;font-weight:normal;letter-spacing:0.000px;color:#000;">Web</div>
<svg class="a" style="left:32px;top:688px" width="13" height="17" viewBox="0 0 13 17"><defs><linearGradient id="pg" x1="0" y1="0" x2="1" y2="1"><stop offset="0" stop-color="#ffffff"/><stop offset="1" stop-color="#dde6e6"/></linearGradient></defs><path d="M0.5,0.5 H8.5 L11.5,3.5 V15.5 H0.5 Z" fill="url(#pg)" stroke="#8c9696"/><path d="M8.5,0.5 V3.5 H11.5" fill="#fff" stroke="#8c9696"/></svg>
<div class="t" style="left:50.50px;top:688.50px;font-size:13px;line-height:16px;font-weight:normal;letter-spacing:1.000px;color:#000;">Пароль статистики</div>
<svg class="a" style="left:32px;top:706px" width="13" height="17" viewBox="0 0 13 17"><defs><linearGradient id="pg" x1="0" y1="0" x2="1" y2="1"><stop offset="0" stop-color="#ffffff"/><stop offset="1" stop-color="#dde6e6"/></linearGradient></defs><path d="M0.5,0.5 H8.5 L11.5,3.5 V15.5 H0.5 Z" fill="url(#pg)" stroke="#8c9696"/><path d="M8.5,0.5 V3.5 H11.5" fill="#fff" stroke="#8c9696"/></svg>
<div class="t" style="left:50.50px;top:706.50px;font-size:13px;line-height:16px;font-weight:normal;letter-spacing:0.531px;color:#000;">Управление лимито</div>
<div class="a" style="left:349px;top:183px;width:17px;height:540px;background:#cccccc"></div>
<div class="a" style="left:349px;top:183px;width:1px;height:540px;background:#666"></div>
<div class="a" style="left:365px;top:183px;width:1px;height:540px;background:#fff"></div>
<div class="a" style="left:364px;top:183px;width:1px;height:540px;background:#666"></div>
<div class="a" style="left:350px;top:183px;width:15px;height:15px;background:#ccc"></div>
<div class="a" style="left:349px;top:183px;width:16px;height:1px;background:#666"></div>
<div class="a" style="left:350px;top:184px;width:1px;height:14px;background:#fff"></div>
<div class="a" style="left:350px;top:184px;width:14px;height:1px;background:#fff"></div>
<div class="a" style="left:350px;top:198px;width:15px;height:1px;background:#666"></div>
<svg class="a" style="left:352px;top:188px" width="11" height="6" viewBox="0 0 11 6"><path d="M0.5,5 H9.5 L5,0.5 Z" fill="#000"/></svg>
<div class="a" style="left:350px;top:707px;width:15px;height:16px;background:#ccc"></div>
<div class="a" style="left:350px;top:707px;width:15px;height:1px;background:#666"></div>
<div class="a" style="left:350px;top:708px;width:14px;height:1px;background:#fff"></div>
<div class="a" style="left:350px;top:708px;width:1px;height:15px;background:#fff"></div>
<div class="a" style="left:349px;top:722px;width:16px;height:1px;background:#666"></div>
<svg class="a" style="left:352px;top:712px" width="11" height="6" viewBox="0 0 11 6"><path d="M0.5,0.5 H9.5 L5,5 Z" fill="#000"/></svg>
<svg class="a" style="left:349px;top:198px" width="16" height="425" viewBox="0 0 16 425"><defs><pattern id="bump349_198" x="3" y="3" width="4" height="4" patternUnits="userSpaceOnUse"><rect x="0" y="0" width="1" height="1" fill="#ccccff"/><rect x="2" y="2" width="1" height="1" fill="#ccccff"/><rect x="1" y="1" width="1" height="1" fill="#66669a"/><rect x="3" y="3" width="1" height="1" fill="#66669a"/></pattern></defs><rect x="0" y="0" width="16" height="425" fill="#9999cc"/><rect x="3" y="3" width="11" height="420" fill="url(#bump349_198)"/><rect x="0.5" y="0.5" width="15" height="424" fill="none" stroke="#66669a"/><path d="M1.5,1 V424 M1,1.5 H15" stroke="#ccccff"/></svg>
<div class="a" style="left:369px;top:160px;width:1px;height:590px;background:#fff"></div>
<div class="a" style="left:373px;top:160px;width:1px;height:590px;background:#666"></div>
<div class="a" style="left:12px;top:733px;width:12px;height:12px;border:1px solid #fff"></div>
<div class="a" style="left:11px;top:732px;width:12px;height:12px;border:1px solid #666"></div>
<div class="t" style="left:28.70px;top:730.50px;font-size:13px;line-height:16px;font-weight:bold;letter-spacing:0.250px;color:#000;">Скрытый</div>
<div class="a" style="left:379px;top:168px;width:1073px;height:173px;border:1px solid #999"></div>
<div class="a" style="left:383.5px;top:167px;width:147.0px;height:3px;background:#ccc"></div>
<div class="t" style="left:389.50px;top:160.50px;font-size:13px;line-height:16px;font-weight:bold;letter-spacing:0.800px;color:#000;">Объекты договора</div>
<div class="t" style="left:414.40px;top:182.50px;font-size:13px;line-height:16px;font-weight:bold;letter-spacing:0.600px;color:#000;">Название:</div>
<div class="a" style="left:491px;top:178px;width:226px;height:25px;background:#fff"></div>
<div class="a" style="left:492px;top:179px;width:225px;height:24px;border:1px solid #fff"></div>
<div class="a" style="left:491px;top:178px;width:225px;height:24px;border:1px solid #666"></div>
<div class="t" style="left:737.40px;top:182.50px;font-size:13px;line-height:16px;font-weight:bold;letter-spacing:0.000px;color:#000;">Тип:</div>
<div class="a" style="left:771px;top:179px;width:170px;height:24px;border:1px solid #fff"></div>
<div class="a" style="left:770px;top:178px;width:170px;height:24px;border:1px solid #666"></div>
<div class="t" style="left:775.70px;top:182.50px;font-size:13px;line-height:16px;font-weight:bold;letter-spacing:0.475px;color:#000;">Любой</div>
<svg class="a" style="left:923px;top:188px" width="11" height="6" viewBox="0 0 11 6"><path d="M0,0 H10 L5,5 Z" fill="#000"/></svg>
<div class="t" style="left:1087.30px;top:182.50px;font-size:13px;line-height:16px;font-weight:bold;letter-spacing:0.513px;color:#000;">Всего записей: 1</div>
<div class="a" style="left:1224px;top:178px;width:26px;height:25px;background:#ccc"></div>
<div class="a" style="left:1225px;top:179px;width:25px;height:24px;border:1px solid #fff"></div>
<div class="a" style="left:1224px;top:178px;width:25px;height:24px;border:1px solid #666"></div>
<svg class="a" style="left:1231px;top:186px" width="11" height="9" viewBox="0 0 11 9"><rect x="0" y="0" width="2" height="9" fill="#000"/><path d="M9,0 V9 L2.5,4.5 Z" fill="#000"/></svg>
<div class="a" style="left:1250px;top:178px;width:26px;height:25px;background:#ccc"></div>
<div class="a" style="left:1251px;top:179px;width:25px;height:24px;border:1px solid #fff"></div>
<div class="a" style="left:1250px;top:178px;width:25px;height:24px;border:1px solid #666"></div>
<svg class="a" style="left:1258px;top:186px" width="9" height="9" viewBox="0 0 9 9"><path d="M7,0 V9 L0.5,4.5 Z" fill="#000"/></svg>
<div class="a" style="left:1275px;top:178px;width:117px;height:25px;border:1px solid #aaa"></div>
<div class="t" style="left:1299.40px;top:182.50px;font-size:13px;line-height:16px;font-weight:normal;letter-spacing:0.720px;color:#000;">1 из 1 [25]</div>
<div class="a" style="left:1392px;top:178px;width:26px;height:25px;background:#ccc"></div>
<div class="a" style="left:1393px;top:179px;width:25px;height:24px;border:1px solid #fff"></div>
<div class="a" style="left:1392px;top:178px;width:25px;height:24px;border:1px solid #666"></div>
<svg class="a" style="left:1401px;top:186px" width="9" height="9" viewBox="0 0 9 9"><path d="M0,0 V9 L6.5,4.5 Z" fill="#000"/></svg>
<div class="a" style="left:1418px;top:178px;width:26px;height:25px;background:#ccc"></div>
<div class="a" style="left:1419px;top:179px;width:25px;height:24px;border:1px solid #fff"></div>
<div class="a" style="left:1418px;top:178px;width:25px;height:24px;border:1px solid #666"></div>
<svg class="a" style="left:1425px;top:186px" width="11" height="9" viewBox="0 0 11 9"><path d="M0,0 V9 L6.5,4.5 Z" fill="#000"/><rect x="7" y="0" width="2" height="9" fill="#000"/></svg>
<div class="a" style="left:414px;top:208px;width:1029px;height:125px;background:#cccccc"></div>
<div class="a" style="left:414px;top:208px;width:1px;height:125px;background:#666"></div>
<div class="a" style="left:414px;top:208px;width:1029px;height:1px;background:#666"></div>
<div class="a" style="left:415px;top:332px;width:1028px;height:1px;background:#fff"></div>
<div class="a" style="left:1443px;top:208px;width:1px;height:125px;background:#fff"></div>
<div class="a" style="left:415px;top:209px;width:79px;height:1px;background:#fff"></div>
<div class="a" style="left:415px;top:209px;width:1px;height:18px;background:#fff"></div>
<div class="a" style="left:494px;top:209px;width:1px;height:18px;background:#666"></div>
<div class="a" style="left:494px;top:209px;width:180px;height:1px;background:#fff"></div>
<div class="a" style="left:494px;top:209px;width:1px;height:18px;background:#fff"></div>
<div class="a" style="left:674px;top:209px;width:1px;height:18px;background:#666"></div>
<div class="a" style="left:674px;top:209px;width:180px;height:1px;background:#fff"></div>
<div class="a" style="left:674px;top:209px;width:1px;height:18px;background:#fff"></div>
<div class="a" style="left:854px;top:209px;width:1px;height:18px;background:#666"></div>
<div class="a" style="left:854px;top:209px;width:573px;height:1px;background:#fff"></div>
<div class="a" style="left:854px;top:209px;width:1px;height:18px;background:#fff"></div>
<div class="a" style="left:1427px;top:209px;width:1px;height:18px;background:#666"></div>
<div class="a" style="left:415px;top:227px;width:1012px;height:1px;background:#666"></div>
<div class="t" style="left:450.00px;top:211.50px;font-size:13px;line-height:16px;font-weight:normal;letter-spacing:0.000px;color:#000;">ID</div>
<div class="t" style="left:561.40px;top:211.50px;font-size:13px;line-height:16px;font-weight:normal;letter-spacing:0.580px;color:#000;">Период</div>
<div class="t" style="left:755.50px;top:211.50px;font-size:13px;line-height:16px;font-weight:normal;letter-spacing:0.000px;color:#000;">Тип</div>
<div class="t" style="left:1111.40px;top:211.50px;font-size:13px;line-height:16px;font-weight:normal;letter-spacing:0.514px;color:#000;">Название</div>
<div class="a" style="left:1427px;top:209px;width:16px;height:19px;background:#ccc"></div>
<div class="a" style="left:1427px;top:209px;width:16px;height:1px;background:#fff"></div>
<div class="a" style="left:1427px;top:209px;width:1px;height:19px;background:#fff"></div>
<div class="a" style="left:1429px;top:222px;width:2px;height:2px;background:#000"></div>
<div class="a" style="left:1433px;top:222px;width:2px;height:2px;background:#000"></div>
<div class="a" style="left:1437px;top:222px;width:2px;height:2px;background:#000"></div>
<div class="a" style="left:415px;top:228px;width:1012px;height:15px;background:#ccccff"></div>
<div class="a" style="left:415px;top:243px;width:1012px;height:1px;background:#aaaacc"></div>
<div class="a" style="left:494px;top:228px;width:1px;height:15px;background:#aaaacc"></div>
<div class="a" style="left:674px;top:228px;width:1px;height:15px;background:#aaaacc"></div>
<div class="a" style="left:854px;top:228px;width:1px;height:15px;background:#aaaacc"></div>
<div class="t" style="left:455.80px;top:227.50px;font-size:13px;line-height:16px;font-weight:normal;letter-spacing:0.400px;color:#000;">3 388</div>
<div class="t" style="left:539.90px;top:227.50px;font-size:13px;line-height:16px;font-weight:normal;letter-spacing:0.492px;color:#000;">12.01.2014-...</div>
<div class="t" style="left:680.50px;top:227.50px;font-size:13px;line-height:16px;font-weight:normal;letter-spacing:0.681px;color:#000;">Абонплаты для объектов</div>
<div class="t" style="left:856.60px;top:227.50px;font-size:13px;line-height:16px;font-weight:normal;letter-spacing:0.761px;color:#000;">Объект с абонплатой</div>
<div class="a" style="left:1427px;top:228px;width:17px;height:104px;background:#cccccc"></div>
<div class="a" style="left:1427px;top:228px;width:1px;height:104px;background:#666"></div>
<div class="a" style="left:1443px;top:228px;width:1px;height:104px;background:#fff"></div>
<div class="a" style="left:1442px;top:228px;width:1px;height:104px;background:#666"></div>
<div class="a" style="left:1428px;top:228px;width:15px;height:15px;background:#ccc"></div>
<div class="a" style="left:1427px;top:228px;width:16px;height:1px;background:#666"></div>
<div class="a" style="left:1428px;top:229px;width:1px;height:14px;background:#fff"></div>
<div class="a" style="left:1428px;top:229px;width:14px;height:1px;background:#fff"></div>
<div class="a" style="left:1428px;top:243px;width:15px;height:1px;background:#666"></div>
<svg class="a" style="left:1430px;top:233px" width="11" height="6" viewBox="0 0 11 6"><path d="M0.5,5 H9.5 L5,0.5 Z" fill="#000"/></svg>
<div class="a" style="left:1428px;top:316px;width:15px;height:16px;background:#ccc"></div>
<div class="a" style="left:1428px;top:316px;width:15px;height:1px;background:#666"></div>
<div class="a" style="left:1428px;top:317px;width:14px;height:1px;background:#fff"></div>
<div class="a" style="left:1428px;top:317px;width:1px;height:15px;background:#fff"></div>
<div class="a" style="left:1427px;top:331px;width:16px;height:1px;background:#666"></div>
<svg class="a" style="left:1430px;top:321px" width="11" height="6" viewBox="0 0 11 6"><path d="M0.5,0.5 H9.5 L5,5 Z" fill="#000"/></svg>
<svg class="a" style="left:390px;top:212px" width="17" height="17" viewBox="0 0 17 17"><rect x="0.5" y="0.5" width="15" height="12" rx="1" fill="#f4f4f4" stroke="#3f8fd8"/><rect x="1" y="1" width="14" height="2.5" fill="#5aaef0"/><path d="M12,8 V15 M8.5,11.5 H15.5" stroke="#2aa52a" stroke-width="2.6"/><path d="M12,8.5 V14.5 M9,11.5 H15" stroke="#6fd04f" stroke-width="1.2"/></svg>
<svg class="a" style="left:390px;top:233px" width="17" height="16" viewBox="0 0 17 16"><rect x="3.5" y="0.5" width="12" height="9" rx="1" fill="#f4f4f4" stroke="#3f8fd8"/><rect x="4" y="1" width="11" height="2" fill="#5aaef0"/><rect x="0.5" y="5.5" width="12" height="9" rx="1" fill="#f4f4f4" stroke="#3f8fd8"/><rect x="1" y="6" width="11" height="2" fill="#5aaef0"/></svg>
<svg class="a" style="left:390px;top:256px" width="17" height="17" viewBox="0 0 17 17"><rect x="0.5" y="0.5" width="15" height="12" rx="1" fill="#f4f4f4" stroke="#3f8fd8"/><rect x="1" y="1" width="14" height="2.5" fill="#5aaef0"/><rect x="9" y="9.5" width="7" height="3" fill="#d8202a"/></svg>
<svg class="a" style="left:390px;top:287px" width="15" height="15" viewBox="0 0 15 15"><path d="M7,0.5 L13,7 H9.5 V13.5 H4.5 V7 H1 Z" fill="#5ab8f5" stroke="#2a7fcf"/></svg>
<svg class="a" style="left:390px;top:310px" width="15" height="15" viewBox="0 0 15 15"><path d="M7,13.5 L13,7 H9.5 V0.5 H4.5 V7 H1 Z" fill="#5ab8f5" stroke="#2a7fcf"/></svg>
<div class="a" style="left:377px;top:344px;width:1080px;height:1px;background:#fff"></div>
<div class="a" style="left:377px;top:347px;width:1080px;height:1px;background:#666"></div>
<svg class="a" style="left:379px;top:352px" width="169" height="18" viewBox="0 0 169 18"><polygon points="0.5,18 0.5,5.5 5.5,0.5 168.5,0.5 168.5,18" fill="#999999"/><polyline points="0.5,18 0.5,5.5 5.5,0.5 168.5,0.5 168.5,18" fill="none" stroke="#666" stroke-width="1"/><polyline points="1.5,18 1.5,5.9 5.9,1.5 167.5,1.5" fill="none" stroke="#fff" stroke-width="1"/></svg>
<div class="t" style="left:389.90px;top:354.50px;font-size:13px;line-height:16px;font-weight:bold;letter-spacing:0.831px;color:#000;">Параметры объекта</div>
<svg class="a" style="left:547px;top:352px" width="139" height="19" viewBox="0 0 139 19"><polygon points="0.5,19 0.5,5.5 5.5,0.5 138.5,0.5 138.5,19" fill="#cccccc"/><polyline points="0.5,19 0.5,5.5 5.5,0.5 138.5,0.5 138.5,19" fill="none" stroke="#666" stroke-width="1"/><polyline points="1.5,19 1.5,5.9 5.9,1.5 137.5,1.5" fill="none" stroke="#fff" stroke-width="1"/></svg>
<div class="t" style="left:557.20px;top:354.50px;font-size:13px;line-height:16px;font-weight:bold;letter-spacing:0.885px;color:#000;">Модули объекта</div>
<div class="a" style="left:377px;top:369px;width:171px;height:1px;background:#fff"></div>
<div class="a" style="left:685px;top:369px;width:769px;height:1px;background:#fff"></div>
<div class="a" style="left:377px;top:369px;width:1px;height:381px;background:#fff"></div>
<div class="a" style="left:377px;top:749px;width:1077px;height:1px;background:#666"></div>
<div class="a" style="left:1453px;top:369px;width:1px;height:381px;background:#666"></div>
<svg class="a" style="left:390px;top:379px" width="17" height="17" viewBox="0 0 17 17"><rect x="0.5" y="0.5" width="15" height="12" rx="1" fill="#f4f4f4" stroke="#3f8fd8"/><rect x="1" y="1" width="14" height="2.5" fill="#5aaef0"/><path d="M12,8 V15 M8.5,11.5 H15.5" stroke="#2aa52a" stroke-width="2.6"/><path d="M12,8.5 V14.5 M9,11.5 H15" stroke="#6fd04f" stroke-width="1.2"/></svg>
<svg class="a" style="left:390px;top:407px" width="17" height="17" viewBox="0 0 17 17"><rect x="0.5" y="0.5" width="15" height="12" rx="1" fill="#f4f4f4" stroke="#3f8fd8"/><rect x="1" y="1" width="14" height="2.5" fill="#5aaef0"/><path d="M7,15 L14,8" stroke="#e8b830" stroke-width="2.2"/><path d="M6,16 L7.5,14" stroke="#333" stroke-width="1.2"/><path d="M13,7 L15,9" stroke="#e05050" stroke-width="1.5"/></svg>
<svg class="a" style="left:390px;top:435px" width="17" height="17" viewBox="0 0 17 17"><rect x="0.5" y="0.5" width="15" height="12" rx="1" fill="#f4f4f4" stroke="#3f8fd8"/><rect x="1" y="1" width="14" height="2.5" fill="#5aaef0"/><rect x="9" y="9.5" width="7" height="3" fill="#d8202a"/></svg>
<svg class="a" style="left:390px;top:472px" width="16" height="16" viewBox="0 0 16 16"><defs><linearGradient id="rg390" x1="0" y1="0" x2="0" y2="1"><stop offset="0" stop-color="#7cc4f4"/><stop offset="1" stop-color="#1a9cf0"/></linearGradient></defs><path d="M8.2,3.1 A4.9,4.9 0 1,1 4.3,5.2" fill="none" stroke="#2272c8" stroke-width="4.2"/><path d="M8.2,3.1 A4.9,4.9 0 1,1 4.3,5.2" fill="none" stroke="url(#rg390)" stroke-width="2.8"/><path d="M1,1 H8 L7.6,8 Z" fill="#5ab0f0" stroke="#2a78d0" stroke-width="0.8"/></svg>
<svg class="a" style="left:419px;top:381px" width="84" height="18" viewBox="0 0 84 18"><polygon points="0.5,18 0.5,5.5 5.5,0.5 83.5,0.5 83.5,18" fill="#999999"/><polyline points="0.5,18 0.5,5.5 5.5,0.5 83.5,0.5 83.5,18" fill="none" stroke="#666" stroke-width="1"/><polyline points="1.5,18 1.5,5.9 5.9,1.5 82.5,1.5" fill="none" stroke="#fff" stroke-width="1"/></svg>
<div class="t" style="left:430.50px;top:382.50px;font-size:13px;line-height:16px;font-weight:bold;letter-spacing:0.700px;color:#000;">Сводная</div>
<svg class="a" style="left:502px;top:381px" width="150" height="19" viewBox="0 0 150 19"><polygon points="0.5,19 0.5,5.5 5.5,0.5 149.5,0.5 149.5,19" fill="#cccccc"/><polyline points="0.5,19 0.5,5.5 5.5,0.5 149.5,0.5 149.5,19" fill="none" stroke="#666" stroke-width="1"/><polyline points="1.5,19 1.5,5.9 5.9,1.5 148.5,1.5" fill="none" stroke="#fff" stroke-width="1"/></svg>
<div class="t" style="left:512.00px;top:382.50px;font-size:13px;line-height:16px;font-weight:bold;letter-spacing:0.693px;color:#000;">Новые абонплаты</div>
<div class="a" style="left:417px;top:399px;width:86px;height:1px;background:#fff"></div>
<div class="a" style="left:651px;top:399px;width:795px;height:1px;background:#fff"></div>
<div class="a" style="left:417px;top:399px;width:1px;height:343px;background:#fff"></div>
<div class="a" style="left:417px;top:741px;width:1029px;height:1px;background:#666"></div>
<div class="a" style="left:1445px;top:399px;width:1px;height:343px;background:#666"></div>
<div class="a" style="left:429px;top:408px;width:12px;height:12px;border:1px solid #fff"></div>
<div class="a" style="left:428px;top:407px;width:12px;height:12px;border:1px solid #666"></div>
<svg class="a" style="left:430px;top:409px" width="9" height="9" viewBox="0 0 9 9"><path d="M1,4.5 L3.5,7.5 L8,1" fill="none" stroke="#000" stroke-width="1.6"/></svg>
<div class="t" style="left:449.60px;top:405.50px;font-size:13px;line-height:16px;font-weight:bold;letter-spacing:0.719px;color:#000;">выводить только элементы, актуальные на дату</div>
<div class="a" style="left:810px;top:402px;width:99px;height:23px;border:1px solid #fff"></div>
<div class="a" style="left:809px;top:401px;width:99px;height:23px;border:1px solid #666"></div>
<div class="t" style="left:822.60px;top:405.50px;font-size:13px;line-height:16px;font-weight:bold;letter-spacing:0.844px;color:#000;">12.02.2014</div>
<div class="a" style="left:426px;top:437px;width:1010px;height:271px;border:1px solid #999"></div>
<div class="a" style="left:430.2px;top:436px;width:80.80000000000001px;height:3px;background:#ccc"></div>
<div class="t" style="left:436.20px;top:429.50px;font-size:13px;line-height:16px;font-weight:bold;letter-spacing:1.257px;color:#000;">Редактор</div>
<svg class="a" style="left:434px;top:451px" width="105" height="20" viewBox="0 0 105 20"><polygon points="0.5,20 0.5,6.5 6.5,0.5 104.5,0.5 104.5,20" fill="#cccccc"/><polyline points="0.5,20 0.5,6.5 6.5,0.5 104.5,0.5 104.5,20" fill="none" stroke="#666" stroke-width="1"/><polyline points="1.5,20 1.5,6.9 6.9,1.5 103.5,1.5" fill="none" stroke="#fff" stroke-width="1"/></svg>
<div class="t" style="left:445.80px;top:452.50px;font-size:13px;line-height:16px;font-weight:bold;letter-spacing:0.975px;color:#000;">Параметры</div>
<svg class="a" style="left:538px;top:451px" width="119" height="19" viewBox="0 0 119 19"><polygon points="0.5,19 0.5,5.5 5.5,0.5 118.5,0.5 118.5,19" fill="#999999"/><polyline points="0.5,19 0.5,5.5 5.5,0.5 118.5,0.5 118.5,19" fill="none" stroke="#666" stroke-width="1"/><polyline points="1.5,19 1.5,5.9 5.9,1.5 117.5,1.5" fill="none" stroke="#fff" stroke-width="1"/></svg>
<div class="t" style="left:549.40px;top:452.50px;font-size:13px;line-height:16px;font-weight:bold;letter-spacing:0.760px;color:#000;">Комментарий</div>
<div class="a" style="left:538px;top:469px;width:892px;height:1px;background:#fff"></div>
<div class="a" style="left:432px;top:469px;width:1px;height:233px;background:#fff"></div>
<div class="a" style="left:432px;top:701px;width:998px;height:1px;background:#666"></div>
<div class="a" style="left:1429px;top:469px;width:1px;height:233px;background:#666"></div>
<div class="t" style="left:444.50px;top:476.00px;font-size:13px;line-height:16px;font-weight:bold;letter-spacing:0.750px;color:#000;">Количество:</div>
<div class="a" style="left:439px;top:494px;width:238px;height:25px;background:#fff"></div>
<div class="a" style="left:440px;top:495px;width:237px;height:24px;border:1px solid #fff"></div>
<div class="a" style="left:439px;top:494px;width:237px;height:24px;border:1px solid #666"></div>
<div class="t" style="left:554.00px;top:497.50px;font-size:13px;line-height:16px;font-weight:normal;letter-spacing:0.000px;color:#000;font-family:"Liberation Mono",monospace;">1</div>
<div class="t" style="left:444.50px;top:529.50px;font-size:13px;line-height:16px;font-weight:bold;letter-spacing:0.883px;color:#000;">Период:</div>
<div class="t" style="left:440.00px;top:551.50px;font-size:13px;line-height:16px;font-weight:bold;letter-spacing:0.000px;color:#000;">с</div>
<div class="a" style="left:452px;top:548px;width:99px;height:24px;border:1px solid #fff"></div>
<div class="a" style="left:451px;top:547px;width:99px;height:24px;border:1px solid #666"></div>
<div class="t" style="left:463.90px;top:551.50px;font-size:13px;line-height:16px;font-weight:bold;letter-spacing:0.911px;color:#000;">12.02.2014</div>
<div class="t" style="left:556.40px;top:551.50px;font-size:13px;line-height:16px;font-weight:bold;letter-spacing:0.000px;color:#000;">по</div>
<div class="a" style="left:579px;top:548px;width:98px;height:24px;border:1px solid #fff"></div>
<div class="a" style="left:578px;top:547px;width:98px;height:24px;border:1px solid #666"></div>
<div class="t" style="left:444.50px;top:581.50px;font-size:13px;line-height:16px;font-weight:bold;letter-spacing:0.450px;color:#000;">Объект:</div>
<div class="a" style="left:439px;top:600px;width:238px;height:24px;border:1px solid #999"></div>
<div class="t" style="left:445.00px;top:604.50px;font-size:13px;line-height:16px;font-weight:bold;letter-spacing:0.556px;color:#999;">Объект с абонплатой</div>
<svg class="a" style="left:660px;top:609px" width="11" height="6" viewBox="0 0 11 6"><path d="M0,0 H10 L5,5 Z" fill="#999"/></svg>
<div class="a" style="left:443px;top:630px;width:12px;height:12px;border:1px solid #999"></div>
<div class="t" style="left:461.00px;top:629.00px;font-size:13px;line-height:16px;font-weight:bold;letter-spacing:0.716px;color:#999;">Показать все объекты</div>
<div class="t" style="left:693.30px;top:475.50px;font-size:13px;line-height:16px;font-weight:bold;letter-spacing:0.617px;color:#000;">Услуга:</div>
<div class="a" style="left:688px;top:494px;width:717px;height:199px;background:#fff"></div>
<div class="a" style="left:688px;top:494px;width:1px;height:199px;background:#666"></div>
<div class="a" style="left:688px;top:494px;width:734px;height:1px;background:#666"></div>
<div class="a" style="left:688px;top:692px;width:734px;height:1px;background:#fff"></div>
<div class="a" style="left:1421px;top:494px;width:1px;height:199px;background:#fff"></div>
<div class="a" style="left:689px;top:580px;width:716px;height:17px;background:#ccccff;border-top:1px solid #9999cc;border-bottom:1px solid #9999cc"></div>
<div class="a" style="left:689px;top:495px;width:717px;height:197px;overflow:hidden">
<div class="t" style="left:1.30px;top:0.50px;font-size:13px;line-height:16px;font-weight:bold;letter-spacing:0.735px">Абонплата за телефоны</div>
<div class="t" style="left:1.30px;top:17.50px;font-size:13px;line-height:16px;font-weight:bold;letter-spacing:0.750px">Абонплата за трафик</div>
<div class="t" style="left:1.30px;top:34.50px;font-size:13px;line-height:16px;font-weight:bold;letter-spacing:0.639px">Абонплата от DialUP</div>
<div class="t" style="left:1.30px;top:51.50px;font-size:13px;line-height:16px;font-weight:bold;letter-spacing:0.600px">Абонплата от IPN</div>
<div class="t" style="left:1.30px;top:68.50px;font-size:13px;line-height:16px;font-weight:bold;letter-spacing:0.775px">Абонплата: Догнать до 600</div>
<div class="t" style="left:1.30px;top:85.50px;font-size:13px;line-height:16px;font-weight:bold;letter-spacing:0.850px">Аренда канала 1Мбит</div>
<div class="t" style="left:1.30px;top:102.50px;font-size:13px;line-height:16px;font-weight:bold;letter-spacing:0.645px">Дополнительные услуги</div>
<div class="t" style="left:1.30px;top:119.50px;font-size:13px;line-height:16px;font-weight:bold;letter-spacing:0.657px">Дополнительный телефонный номер</div>
<div class="t" style="left:1.30px;top:136.50px;font-size:13px;line-height:16px;font-weight:bold;letter-spacing:0.863px">Предоставление фиксированного адреса</div>
<div class="t" style="left:1.30px;top:153.50px;font-size:13px;line-height:16px;font-weight:bold;letter-spacing:0.705px">Тестирование абонтки 1</div>
<div class="t" style="left:1.30px;top:170.50px;font-size:13px;line-height:16px;font-weight:bold;letter-spacing:0.757px">Тестирование абонтки 2</div>
<div class="t" style="left:1.30px;top:187.50px;font-size:13px;line-height:16px;font-weight:bold;letter-spacing:0.671px">Тестирую</div>
</div>
<div class="a" style="left:1405px;top:494px;width:17px;height:199px;background:#cccccc"></div>
<div class="a" style="left:1405px;top:494px;width:1px;height:199px;background:#666"></div>
<div class="a" style="left:1421px;top:494px;width:1px;height:199px;background:#fff"></div>
<div class="a" style="left:1420px;top:494px;width:1px;height:199px;background:#666"></div>
<div class="a" style="left:1406px;top:494px;width:15px;height:15px;background:#ccc"></div>
<div class="a" style="left:1405px;top:494px;width:16px;height:1px;background:#666"></div>
<div class="a" style="left:1406px;top:495px;width:1px;height:14px;background:#fff"></div>
<div class="a" style="left:1406px;top:495px;width:14px;height:1px;background:#fff"></div>
<div class="a" style="left:1406px;top:509px;width:15px;height:1px;background:#666"></div>
<svg class="a" style="left:1408px;top:499px" width="11" height="6" viewBox="0 0 11 6"><path d="M0.5,5 H9.5 L5,0.5 Z" fill="#000"/></svg>
<div class="a" style="left:1406px;top:677px;width:15px;height:16px;background:#ccc"></div>
<div class="a" style="left:1406px;top:677px;width:15px;height:1px;background:#666"></div>
<div class="a" style="left:1406px;top:678px;width:14px;height:1px;background:#fff"></div>
<div class="a" style="left:1406px;top:678px;width:1px;height:15px;background:#fff"></div>
<div class="a" style="left:1405px;top:692px;width:16px;height:1px;background:#666"></div>
<svg class="a" style="left:1408px;top:682px" width="11" height="6" viewBox="0 0 11 6"><path d="M0.5,0.5 H9.5 L5,5 Z" fill="#000"/></svg>
<svg class="a" style="left:1405px;top:567px" width="16" height="106" viewBox="0 0 16 106"><defs><pattern id="bump1405_567" x="3" y="3" width="4" height="4" patternUnits="userSpaceOnUse"><rect x="0" y="0" width="1" height="1" fill="#ccccff"/><rect x="2" y="2" width="1" height="1" fill="#ccccff"/><rect x="1" y="1" width="1" height="1" fill="#66669a"/><rect x="3" y="3" width="1" height="1" fill="#66669a"/></pattern></defs><rect x="0" y="0" width="16" height="106" fill="#9999cc"/><rect x="3" y="3" width="11" height="101" fill="url(#bump1405_567)"/><rect x="0.5" y="0.5" width="15" height="105" fill="none" stroke="#66669a"/><path d="M1.5,1 V105 M1,1.5 H15" stroke="#ccccff"/></svg>
<div class="a" style="left:1289px;top:715px;width:53px;height:24px;background:#ccc"></div>
<div class="a" style="left:1290px;top:716px;width:52px;height:23px;border:1px solid #fff"></div>
<div class="a" style="left:1289px;top:715px;width:52px;height:23px;border:1px solid #666"></div>
<div class="t" style="left:1306.00px;top:719.50px;font-size:13px;line-height:16px;font-weight:bold;letter-spacing:2.000px;color:#000;">Ок</div>
<div class="a" style="left:1346px;top:715px;width:88px;height:24px;background:#ccc"></div>
<div class="a" style="left:1347px;top:716px;width:87px;height:23px;border:1px solid #fff"></div>
<div class="a" style="left:1346px;top:715px;width:87px;height:23px;border:1px solid #666"></div>
<div class="t" style="left:1363.50px;top:719.50px;font-size:13px;line-height:16px;font-weight:bold;letter-spacing:0.800px;color:#000;">Отмена</div>
<div class="a" style="left:5px;top:756px;width:171px;height:18px;background:#999999"></div>
<div class="a" style="left:5px;top:755px;width:171px;height:1px;background:#666"></div>
<div class="a" style="left:5px;top:773px;width:171px;height:1px;background:#666"></div>
<div class="a" style="left:175px;top:755px;width:1px;height:19px;background:#666"></div>
<div class="a" style="left:6px;top:756px;width:1px;height:17px;background:#fff"></div>
<div class="a" style="left:10px;top:756px;width:15px;height:16px;background:#a6a6a6;border-top:1px solid #fff;border-left:1px solid #fff"></div>
<svg class="a" style="left:13px;top:759px" width="10" height="10" viewBox="0 0 10 10"><path d="M1.5,1.5 L8.5,8.5 M8.5,1.5 L1.5,8.5" stroke="#000" stroke-width="2"/></svg>
<div class="t" style="left:30.30px;top:757.00px;font-size:13px;line-height:16px;font-weight:bold;letter-spacing:1.113px;color:#000;">Редактор адресов</div>
<div class="a" style="left:177px;top:756px;width:102px;height:18px;background:#999999"></div>
<div class="a" style="left:177px;top:755px;width:102px;height:1px;background:#666"></div>
<div class="a" style="left:177px;top:773px;width:102px;height:1px;background:#666"></div>
<div class="a" style="left:278px;top:755px;width:1px;height:19px;background:#666"></div>
<div class="a" style="left:178px;top:756px;width:1px;height:17px;background:#fff"></div>
<div class="a" style="left:181px;top:756px;width:15px;height:16px;background:#a6a6a6;border-top:1px solid #fff;border-left:1px solid #fff"></div>
<svg class="a" style="left:184px;top:759px" width="10" height="10" viewBox="0 0 10 10"><path d="M1.5,1.5 L8.5,8.5 M8.5,1.5 L1.5,8.5" stroke="#000" stroke-width="2"/></svg>
<div class="t" style="left:200.50px;top:757.00px;font-size:13px;line-height:16px;font-weight:bold;letter-spacing:0.443px;color:#000;">Рассылки</div>
<div class="a" style="left:280px;top:756px;width:157px;height:18px;background:#999999"></div>
<div class="a" style="left:280px;top:755px;width:157px;height:1px;background:#666"></div>
<div class="a" style="left:280px;top:773px;width:157px;height:1px;background:#666"></div>
<div class="a" style="left:436px;top:755px;width:1px;height:19px;background:#666"></div>
<div class="a" style="left:281px;top:756px;width:1px;height:17px;background:#fff"></div>
<div class="a" style="left:285px;top:756px;width:15px;height:16px;background:#a6a6a6;border-top:1px solid #fff;border-left:1px solid #fff"></div>
<svg class="a" style="left:288px;top:759px" width="10" height="10" viewBox="0 0 10 10"><path d="M1.5,1.5 L8.5,8.5 M8.5,1.5 L1.5,8.5" stroke="#000" stroke-width="2"/></svg>
<div class="t" style="left:305.30px;top:757.00px;font-size:13px;line-height:16px;font-weight:bold;letter-spacing:0.729px;color:#000;">Поиск договоров</div>
<div class="a" style="left:547px;top:756px;width:198px;height:18px;background:#999999"></div>
<div class="a" style="left:547px;top:755px;width:198px;height:1px;background:#666"></div>
<div class="a" style="left:547px;top:773px;width:198px;height:1px;background:#666"></div>
<div class="a" style="left:744px;top:755px;width:1px;height:19px;background:#666"></div>
<div class="a" style="left:548px;top:756px;width:1px;height:17px;background:#fff"></div>
<div class="a" style="left:551px;top:756px;width:15px;height:16px;background:#a6a6a6;border-top:1px solid #fff;border-left:1px solid #fff"></div>
<svg class="a" style="left:554px;top:759px" width="10" height="10" viewBox="0 0 10 10"><path d="M1.5,1.5 L8.5,8.5 M8.5,1.5 L1.5,8.5" stroke="#000" stroke-width="2"/></svg>
<div class="t" style="left:572.00px;top:757.00px;font-size:13px;line-height:16px;font-weight:bold;letter-spacing:0.579px;color:#000;">Справочники объектов</div>
<div class="a" style="left:437px;top:755px;width:109px;height:20px;background:#cccccc"></div>
<div class="a" style="left:437px;top:755px;width:1px;height:20px;background:#fff"></div>
<div class="a" style="left:438px;top:775px;width:108px;height:1px;background:#666"></div>
<div class="a" style="left:545px;top:755px;width:1px;height:20px;background:#666"></div>
<div class="a" style="left:442px;top:758px;width:16px;height:16px;background:#cccccc;border-top:1px solid #fff;border-left:1px solid #fff;border-right:1px solid #999;border-bottom:1px solid #999"></div>
<svg class="a" style="left:445px;top:761px" width="10" height="10" viewBox="0 0 10 10"><path d="M1.5,1.5 L8.5,8.5 M8.5,1.5 L1.5,8.5" stroke="#000" stroke-width="2"/></svg>
<div class="t" style="left:463.80px;top:757.65px;font-size:14px;line-height:17px;font-weight:normal;letter-spacing:1.122px;color:#000;">artur_test</div>
<div class="a" style="left:0px;top:780px;width:1463px;height:1px;background:#8a8a8a"></div>
</body></html>
